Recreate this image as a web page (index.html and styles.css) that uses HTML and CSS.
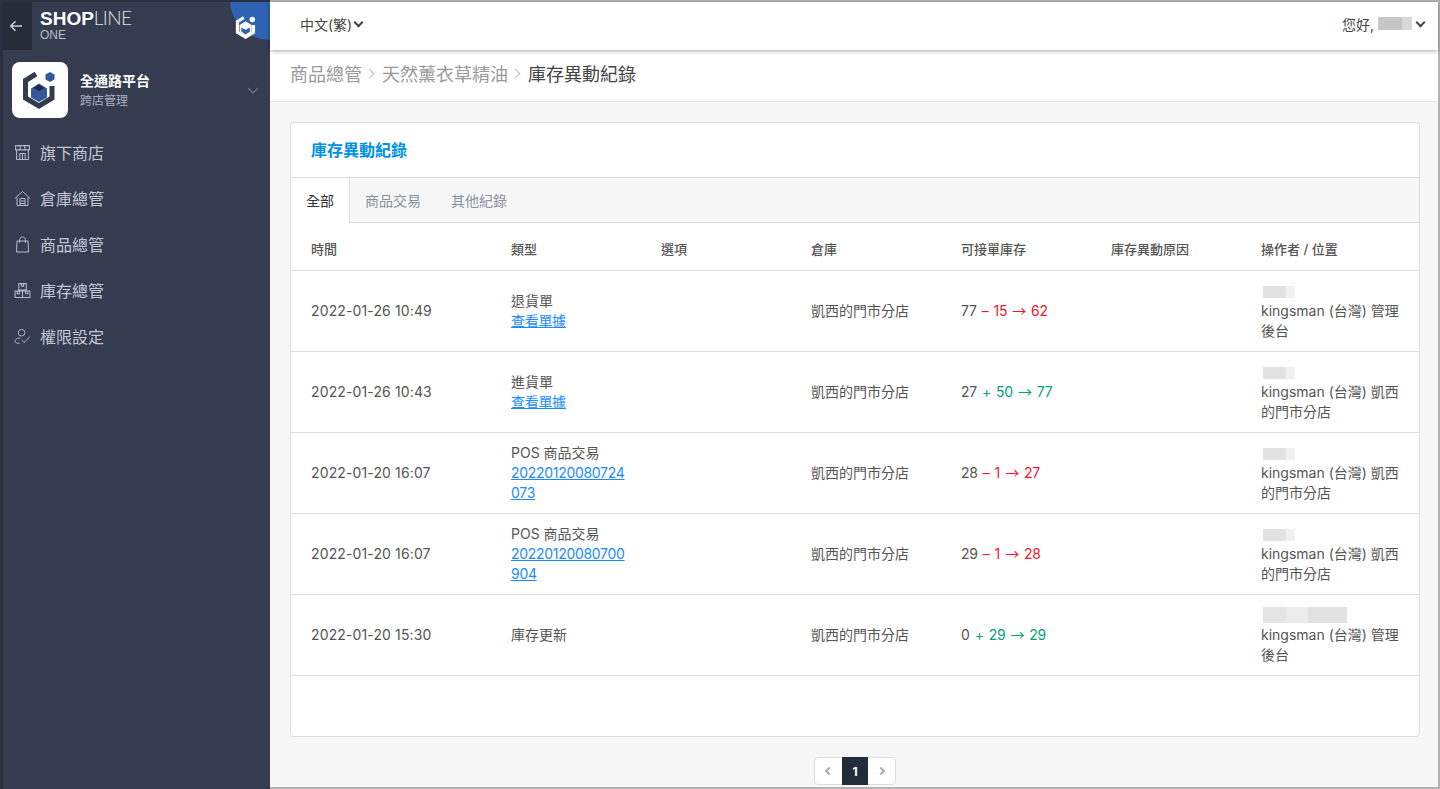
FILE: index.html
```html
<!DOCTYPE html>
<html>
	<head>
		<meta charset="UTF-8">
		<title>庫存異動紀錄</title>
		<link rel="stylesheet" href="styles.css">
	</head>
	<body>
		<div class="frame">
			<aside class="sidebar">
				<div class="brand">
					<a class="back" href="###">
						<svg width="14" height="12" viewBox="0 0 14 12" fill="none" stroke="#c9ccd4" stroke-width="1.6"><path d="M13 6H2M6.500 1.200 1.800 6l4.700 4.800"/></svg>
					</a>
					<div class="brand-name">
						<div class="brand-main"><b>SHOP</b><span>LINE</span></div>
						<div class="brand-sub">ONE</div>
					</div>
					<div class="corner">
						<svg width="22" height="25" viewBox="8 6 36 41"><path d="M24 12 13.500 18.500V36L27 44l13-8V24" fill="none" stroke="#fff" stroke-width="5"/><path d="M27 18 17 24v13l10 6 10-6V24z" fill="#fff"/><path d="M20 28l7 4 7-4v7l-7 4.500-7-4.500z" fill="#2f62b2"/><circle cx="38" cy="15" r="4.500" fill="#fff"/></svg>
					</div>
				</div>
				<div class="store">
					<div class="store-logo">
						<svg width="56" height="56" viewBox="0 0 56 56"><path d="M24 12 13.500 18.500V36L27 44l13-8V24" fill="none" stroke="#353b4f" stroke-width="5"/><path d="M27 21.500 19 26.500V35.500L27 40l8-4.500V26.500z" fill="#35589a"/><path d="M27 22.500 21.500 26 27 29l5.500-3z" fill="#1f2b4a"/><path d="M38 10l4.500 2.500v5L38 20l-4.500-2.500v-5z" fill="#35589a"/></svg>
					</div>
					<div class="store-text">
						<div class="store-name">全通路平台</div>
						<div class="store-sub">跨店管理</div>
					</div>
					<svg class="store-arrow" width="12" height="7" viewBox="0 0 12 7" fill="none" stroke="#6f7689" stroke-width="1.2"><path d="M1 1l5 5 5-5"/></svg>
				</div>
				<ul class="menu">
					<li>
						<svg width="17" height="17" viewBox="0 0 16 16" fill="none" stroke="#b4b9c6"><path d="M1.500 1.500h13v4h-13zM5.800 1.500v4M10.200 1.500v4M2.500 5.500v9h11v-9M5.500 14.500v-5.500h5v5.500M8 9v5.500"/></svg>
						<span>旗下商店</span>
					</li>
					<li>
						<svg width="17" height="17" viewBox="0 0 17 16" fill="none" stroke="#b4b9c6"><path d="M.8 8 8.500 1l7.700 7M3 7v8h11V7M6 15V8h5v7M6 10.500h5M6 13h5"/></svg>
						<span>倉庫總管</span>
					</li>
					<li>
						<svg width="17" height="17" viewBox="0 0 16 17" fill="none" stroke="#b4b9c6"><path d="M2.500 5h11l.5 11H2zM5.200 7V3.500C5.200 1.800 6.400 1 8 1s2.800.8 2.800 2.500V7"/></svg>
						<span>商品總管</span>
					</li>
					<li>
						<svg width="17" height="17" viewBox="0 0 16 16" fill="none" stroke="#b4b9c6"><path d="M4.500 1.500h7v6h-7zM1 8.500h14v6H1zM8 8.500v6M7 1.500v2.500h2V1.500M3 8.500V11h2V8.500M11 8.500V11h2V8.500"/></svg>
						<span>庫存總管</span>
					</li>
					<li>
						<svg width="17" height="17" viewBox="0 0 18 17" fill="none" stroke="#b4b9c6"><circle cx="8" cy="4.500" r="3.500"/><path d="M6.500 10C3 10.300 1 12 1 13.500S3 15.800 6 15.800M8 12l2.500 3 6-6"/></svg>
						<span>權限設定</span>
					</li>
				</ul>
			</aside>
			<div class="main">
				<header class="topbar">
					<div class="lang">中文(繁)<i class="caret"></i></div>
					<div class="user">您好,<span class="mask mask-user"></span><i class="caret"></i></div>
				</header>
				<nav class="crumbs">
					<span>商品總管</span>
					<em class="sep"></em>
					<span>天然薰衣草精油</span>
					<em class="sep"></em>
					<span class="current">庫存異動紀錄</span>
				</nav>
				<div class="content">
					<section class="card">
						<h2 class="card-title">庫存異動紀錄</h2>
						<div class="tabs">
							<a class="tab active" href="###">全部</a>
							<a class="tab" href="###">商品交易</a>
							<a class="tab" href="###">其他紀錄</a>
						</div>
						<table class="records">
							<thead>
								<tr>
									<th class="col-time">時間</th>
									<th>類型</th>
									<th>選項</th>
									<th>倉庫</th>
									<th>可接單庫存</th>
									<th>庫存異動原因</th>
									<th class="col-op">操作者 / 位置</th>
								</tr>
							</thead>
							<tbody>
								<tr>
									<td>2022-01-26 10:49</td>
									<td>退貨單<br><a href="###">查看單據</a></td>
									<td></td>
									<td>凱西的門市分店</td>
									<td class="qty">77 <span class="down">– 15 <i>→</i> 62</span></td>
									<td></td>
									<td><div class="mask mask-s"></div>kingsman (台灣) 管理後台</td>
								</tr>
								<tr>
									<td>2022-01-26 10:43</td>
									<td>進貨單<br><a href="###">查看單據</a></td>
									<td></td>
									<td>凱西的門市分店</td>
									<td class="qty">27 <span class="up">+ 50 <i>→</i> 77</span></td>
									<td></td>
									<td><div class="mask mask-s"></div>kingsman (台灣) 凱西的門市分店</td>
								</tr>
								<tr>
									<td>2022-01-20 16:07</td>
									<td>POS 商品交易<br><a href="###">20220120080724073</a></td>
									<td></td>
									<td>凱西的門市分店</td>
									<td class="qty">28 <span class="down">– 1 <i>→</i> 27</span></td>
									<td></td>
									<td><div class="mask mask-s"></div>kingsman (台灣) 凱西的門市分店</td>
								</tr>
								<tr>
									<td>2022-01-20 16:07</td>
									<td>POS 商品交易<br><a href="###">20220120080700904</a></td>
									<td></td>
									<td>凱西的門市分店</td>
									<td class="qty">29 <span class="down">– 1 <i>→</i> 28</span></td>
									<td></td>
									<td><div class="mask mask-s"></div>kingsman (台灣) 凱西的門市分店</td>
								</tr>
								<tr>
									<td>2022-01-20 15:30</td>
									<td>庫存更新</td>
									<td></td>
									<td>凱西的門市分店</td>
									<td class="qty">0 <span class="up">+ 29 <i>→</i> 29</span></td>
									<td></td>
									<td><div class="mask mask-l"></div>kingsman (台灣) 管理後台</td>
								</tr>
							</tbody>
						</table>
					</section>
					<div class="pager">
						<a href="###"><i class="chev chev-left"></i></a>
						<a class="on" href="###">1</a>
						<a href="###"><i class="chev chev-right"></i></a>
					</div>
				</div>
			</div>
		</div>
	</body>
</html>
```

FILE: styles.css
```css
*{
	margin: 0;
	padding: 0;
	box-sizing: border-box;
}
html,body{
	height: 100%;
	overflow: hidden;
}
body{
	font-family: Inter, "Noto Sans CJK TC", sans-serif;
	font-size: 14px;
	color: #555;
	background: #f7f7f7;
}
a{
	text-decoration: none;
}
ul{
	list-style: none;
}
.frame{
	display: flex;
	height: 789px;
	border-top: 2px solid #b2b2b2;
	border-right: 2px solid #b2b2b2;
	border-bottom: 2px solid #b2b2b2;
}

/* sidebar */
.sidebar{
	width: 270px;
	flex: none;
	background: #363c50;
	border-top: 2px solid #2b3040;
	border-left: 3px solid #2b3040;
	margin-top: -2px;
	margin-bottom: -2px;
}
.brand{
	height: 48px;
	display: flex;
	position: relative;
	overflow: hidden;
}
.back{
	width: 29px;
	padding-right: 4px;
	display: flex;
	align-items: center;
	justify-content: center;
	background: #282c39;
}
.brand-name{
	margin-left: 8px;
	padding-top: 6px;
	color: #fff;
}
.brand-main{
	font-family: "Liberation Sans", sans-serif;
	font-size: 19px;
	line-height: 20px;
	color: #fff;
}
.brand-main span{
	font-family: Lato, sans-serif;
	font-weight: 300;
	letter-spacing: -.6px;
	color: #e0e2e6;
}
.brand-sub{
	font-family: "Liberation Sans", sans-serif;
	font-size: 12px;
	line-height: 12px;
	color: #b9bcc6;
}
.corner{
	position: absolute;
	top: -42px;
	right: -40px;
	width: 80px;
	height: 80px;
	border-radius: 50%;
	background: #2f62b2;
}
.corner svg{
	position: absolute;
	left: 4px;
	top: 54px;
}
.store{
	display: flex;
	align-items: center;
	padding: 12px 11px 0 9px;
}
.store-logo{
	width: 56px;
	height: 56px;
	border-radius: 8px;
	background: #fff;
	display: flex;
}
.store-text{
	flex: 1;
	margin-left: 12px;
	padding-top: 2px;
}
.store-name{
	font-size: 14px;
	line-height: 20px;
	font-weight: 700;
	color: #fff;
}
.store-sub{
	font-size: 12px;
	line-height: 20px;
	color: #aab0bf;
}
.menu{
	padding-top: 11px;
}
.menu li{
	height: 46px;
	display: flex;
	align-items: center;
	padding-left: 11px;
	font-size: 16px;
	color: #c3c8d4;
}
.menu li svg{
	flex: none;
	margin-right: 9px;
}

/* top */
.main{
	flex: 1;
	min-width: 0;
	display: flex;
	flex-direction: column;
}
.topbar{
	height: 48px;
	flex: none;
	display: flex;
	align-items: center;
	justify-content: space-between;
	padding: 0 14px 5px 30px;
	background: #fff;
	box-shadow: 0 1px 4px rgba(0,0,0,.35);
	position: relative;
	color: #444;
}
.lang,.user{
	display: flex;
	align-items: center;
}
.lang .caret{
	margin-left: 3px;
}
.user{
	margin-right: -1px;
}
.caret{
	width: 7px;
	height: 7px;
	margin: -3px 1px 0 5px;
	border-right: 2px solid #444;
	border-bottom: 2px solid #444;
	transform: rotate(45deg);
}
.mask{
	display: block;
	background: #e2e2e2;
}
.mask-user{
	width: 34px;
	height: 13px;
	margin-left: 4px;
	background: linear-gradient(90deg, #c6c6c6 70%, #d8d8d8 70%);
}
.mask-s{
	width: 32px;
	height: 12px;
	margin: 5px 0 3px 2px;
	background: linear-gradient(90deg, #e2e2e2 72%, #f0f0f0 72%);
}
.mask-l{
	width: 84px;
	height: 16px;
	margin: 2px 0 2px 2px;
	background: linear-gradient(90deg, #e4e4e4 27%, #ececec 27%, #ececec 54%, #e2e2e2 54%);
}
.crumbs{
	height: 52px;
	flex: none;
	display: flex;
	align-items: center;
	padding: 0 0 5px 20px;
	font-size: 18px;
	color: #999;
	background: #fff;
	border-bottom: 1px solid #e5e5e5;
}
.crumbs .current{
	color: #444;
}
.sep{
	width: 7px;
	height: 7px;
	margin: 0 9px 0 4px;
	border-top: 1px solid #b6bccb;
	border-right: 1px solid #b6bccb;
	transform: rotate(45deg);
}

/* card */
.content{
	flex: 1;
	padding: 20px 18px 0 20px;
}
.card{
	height: 615px;
	background: #fff;
	border: 1px solid #ddd;
	border-radius: 4px;
}
.card-title{
	height: 54px;
	padding-left: 20px;
	font-size: 16px;
	line-height: 54px;
	font-weight: 700;
	color: #0090e6;
}
.tabs{
	display: flex;
	height: 46px;
	background: #f7f7f7;
	border-top: 1px solid #ddd;
	border-bottom: 1px solid #ddd;
}
.tab{
	height: 45px;
	padding: 0 15px;
	line-height: 46px;
	color: #8a8fa0;
}
.tab.active{
	color: #333;
	background: #fff;
	border-right: 1px solid #ddd;
}
.records{
	width: 100%;
	border-collapse: collapse;
	table-layout: fixed;
}
.records th{
	height: 47px;
	width: 150px;
	padding: 5px 0 0 20px;
	text-align: left;
	font-size: 13px;
	font-weight: 500;
	color: #555;
	border-bottom: 1px solid #ddd;
}
.records th.col-time{
	width: 200px;
}
.records th.col-op{
	width: 178px;
}
.records td{
	height: 81px;
	padding: 0 16px 0 20px;
	line-height: 20px;
	border-bottom: 1px solid #ddd;
	word-break: break-all;
}
.records td:first-child{
	letter-spacing: .13px;
}
.records td a{
	color: #1a8cff;
	text-decoration: underline;
	letter-spacing: -.3px;
}
.qty{
	letter-spacing: -.3px;
	word-spacing: 1.500px;
}
.qty i{
	font-family: "Noto Sans CJK TC", sans-serif;
	font-style: normal;
}
.down{
	color: #f5142d;
}
.up{
	color: #00a37a;
}

/* pager */
.pager{
	display: flex;
	width: 82px;
	height: 28px;
	margin: 20px auto 0;
	background: #fff;
	border: 1px solid #ddd;
	border-radius: 4px;
}
.pager a{
	flex: 1;
	display: flex;
	align-items: center;
	justify-content: center;
	font-size: 12px;
	font-weight: 700;
	color: #999;
}
.pager a.on{
	margin: -1px 0;
	color: #fff;
	background: #232d3a;
}
.chev{
	width: 6px;
	height: 6px;
	border-top: 2px solid #aaa;
	border-left: 2px solid #aaa;
}
.chev-left{
	transform: rotate(-45deg);
	margin-left: 2px;
}
.chev-right{
	transform: rotate(135deg);
	margin-right: 2px;
}
```
